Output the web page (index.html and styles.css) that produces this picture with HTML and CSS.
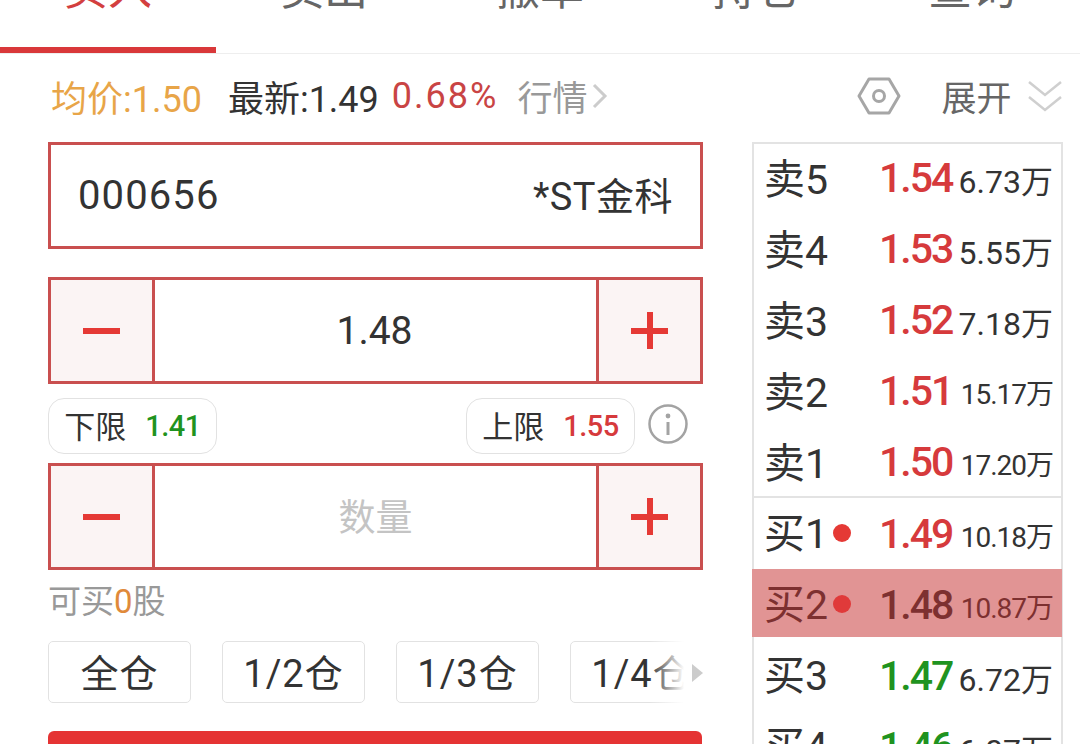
FILE: index.html
```html
<!DOCTYPE html>
<html lang="zh-CN">
<head>
<meta charset="utf-8">
<title>买入</title>
<link rel="stylesheet" href="styles.css">
</head>
<body>
<div class="page">
  <nav class="tabs">
    <div class="tab active">买入</div>
    <div class="tab">卖出</div>
    <div class="tab">撤单</div>
    <div class="tab">持仓</div>
    <div class="tab">查询</div>
  </nav>
  <div class="quote">
    <span class="avg">均价:1.50</span>
    <span class="latest">最新:1.49</span>
    <span class="pct">0.68%</span>
    <span class="market">行情</span>
    <svg class="chev" width="16" height="26" viewBox="0 0 16 26"><path d="M2 2l11 11L2 24" fill="none" stroke="#ccc" stroke-width="3"/></svg>
    <svg class="hex" width="44" height="38" viewBox="0 0 44 38"><path d="M12 2h20l10 17-10 17H12L2 19z" fill="none" stroke="#a6a6a6" stroke-width="3" stroke-linejoin="round"/><circle cx="22" cy="19" r="5.5" fill="none" stroke="#a6a6a6" stroke-width="3"/></svg>
    <span class="expand">展开</span>
    <svg class="dbl" width="34" height="34" viewBox="0 0 34 34"><path d="M1 3l16 13L33 3M1 18l16 13 16-13" fill="none" stroke="#cfcfcf" stroke-width="2.5"/></svg>
  </div>
  <div class="main">
    <section class="form">
      <div class="code box"><span class="code-no">000656</span><span class="code-name">*ST金科</span></div>
      <div class="stepper box">
        <div class="step"><span class="minus"></span></div>
        <div class="val">1.48</div>
        <div class="step"><span class="plus"></span></div>
      </div>
      <div class="limits">
        <div class="chip"><span class="lim-lab">下限</span><b class="lim green">1.41</b></div>
        <div class="chip up"><span class="lim-lab">上限</span><b class="lim red">1.55</b></div>
        <svg class="info" width="40" height="40" viewBox="0 0 40 40"><circle cx="20" cy="20" r="18.5" fill="none" stroke="#a3a3a3" stroke-width="2.5"/><circle cx="20" cy="12" r="2.4" fill="#a3a3a3"/><path d="M20 18v13" stroke="#a3a3a3" stroke-width="3"/></svg>
      </div>
      <div class="stepper box">
        <div class="step"><span class="minus"></span></div>
        <div class="val ph">数量</div>
        <div class="step"><span class="plus"></span></div>
      </div>
      <div class="can">可买<span class="zero">0</span>股</div>
      <div class="ratios">
        <div class="ratio">全仓</div>
        <div class="ratio">1/2仓</div>
        <div class="ratio">1/3仓</div>
        <div class="ratio">1/4仓</div>
        <div class="fade"></div>
        <div class="arrow"></div>
      </div>
      <div class="submit"></div>
    </section>
    <aside class="book">
      <div class="side">
        <div class="row"><span class="lab">卖5</span><span class="price red">1.54</span><span class="vol">6.73万</span></div>
        <div class="row"><span class="lab">卖4</span><span class="price red">1.53</span><span class="vol">5.55万</span></div>
        <div class="row"><span class="lab">卖3</span><span class="price red">1.52</span><span class="vol">7.18万</span></div>
        <div class="row"><span class="lab">卖2</span><span class="price red">1.51</span><span class="vol small">15.17万</span></div>
        <div class="row"><span class="lab">卖1</span><span class="price red">1.50</span><span class="vol small">17.20万</span></div>
      </div>
      <div class="side buy">
        <div class="row"><span class="lab">买1<i class="dot"></i></span><span class="price red">1.49</span><span class="vol small">10.18万</span></div>
        <div class="row sel"><span class="lab">买2<i class="dot"></i></span><span class="price">1.48</span><span class="vol small">10.87万</span></div>
        <div class="row"><span class="lab">买3</span><span class="price green">1.47</span><span class="vol">6.72万</span></div>
        <div class="row"><span class="lab">买4</span><span class="price green">1.46</span><span class="vol">6.07万</span></div>
      </div>
    </aside>
  </div>
</div>
</body>
</html>
```
FILE: styles.css
```css
* { box-sizing: border-box; }
html, body { margin: 0; height: 100%; overflow: hidden; background: #fff; }
body { font-family: Roboto, "Noto Sans CJK SC", sans-serif; color: #333; }
.page { width: 1080px; height: 744px; overflow: hidden; }

.tabs { display: flex; height: 54px; border-bottom: 1px solid #eee; overflow: hidden; }
.tab { width: 216px; height: 53px; display: flex; align-items: flex-end; justify-content: center; font-size: 44px; line-height: 60px; padding-bottom: 33px; color: #666; flex: none; }
.tab.active { color: #d33f3f; border-bottom: 6px solid #d9383a; padding-bottom: 27px; }

.quote { height: 88px; padding: 0 0 5px 51px; display: flex; align-items: center; font-size: 36px; }
.avg { color: #e8a548; }
.latest { margin-left: 26px; color: #333; }
.pct { margin-left: 13px; color: #c94444; letter-spacing: 2px; }
.market { margin-left: 19px; color: #999; font-size: 35px; }
.chev { margin-left: 5px; }
.hex { margin-left: 249px; }
.expand { margin-left: 40px; color: #666; font-size: 35px; }
.dbl { margin-left: 17px; }

.main { display: flex; align-items: flex-start; }
.form { width: 655px; margin-left: 48px; flex: none; }
.box { border: 3px solid #c94f4f; height: 107px; }
.code { display: flex; align-items: center; justify-content: space-between; padding: 0 27px 0 27px; }
.code-no { font-size: 40px; letter-spacing: 1.1px; }
.code-name { font-size: 38px; letter-spacing: 0.5px; padding-bottom: 5px; }

.stepper { display: flex; margin-top: 28px; }
.limits + .stepper { margin-top: 9px; }
.step { width: 104px; flex: none; background: #fbf4f4; display: flex; align-items: center; justify-content: center; }
.step:first-child { border-right: 3px solid #c94f4f; }
.step:last-child { border-left: 3px solid #c94f4f; }
.minus, .plus { display: block; width: 37px; height: 37px; background: linear-gradient(#e53935, #e53935) center / 37px 6px no-repeat; }
.plus { background: linear-gradient(#e53935, #e53935) center / 37px 6px no-repeat, linear-gradient(#e53935, #e53935) center / 6px 37px no-repeat; }
.val { flex: 1; display: flex; align-items: center; justify-content: center; font-size: 39px; padding-right: 2px; }
.val.ph { color: #c4c4c4; font-size: 37px; padding: 0 0 4px; }

.limits { display: flex; align-items: center; margin-top: 14px; }
.chip { width: 169px; height: 56px; border: 1px solid #e2e2e2; border-radius: 16px; display: flex; align-items: center; justify-content: center; color: #333; }
.chip.up { margin-left: 249px; }
.lim-lab { font-size: 31px; padding-bottom: 4px; }
.lim { font-weight: 500; font-size: 29px; letter-spacing: -0.5px; margin-left: 19px; }
.info { margin: 0 0 4px 13px; }
.green { color: #1f9320; }
.red { color: #d63a3c; }

.can { margin-top: 13px; font-size: 33px; color: #999; line-height: 38px; }
.zero { color: #e08a3a; }

.ratios { display: flex; gap: 31px; margin-top: 20px; position: relative; overflow: hidden; }
.ratio { width: 143px; height: 62px; flex: none; border: 1px solid #e2e2e2; border-radius: 5px; display: flex; align-items: center; justify-content: center; font-size: 38px; letter-spacing: 1px; padding-bottom: 4px; color: #333; }
.fade { position: absolute; right: 0; top: 0; bottom: 0; width: 54px; background: linear-gradient(to right, rgba(255,255,255,0), #fff 65%); }
.arrow { position: absolute; right: 0; top: 23px; width: 0; height: 0; border-left: 11px solid #ccc; border-top: 9px solid transparent; border-bottom: 9px solid transparent; }
.submit { height: 60px; margin-top: 28px; background: #e53333; border-radius: 6px; width: 654px; }

.book { width: 311px; margin-left: 49px; flex: none; border: 2px solid #e3e3e3; border-bottom: 0; height: 620px; }
.side { display: flex; flex-direction: column; gap: 3px; }
.buy { border-top: 2px solid #e3e3e3; }
.row { height: 68px; flex: none; display: flex; align-items: center; padding: 0 8px 0 10px; }
.buy .row { padding-top: 4px; }
.lab { width: 115px; font-size: 41px; flex: none; display: flex; align-items: center; padding-bottom: 5px; }
.buy .lab { padding-bottom: 8px; }
.price { width: 70px; font-size: 41px; font-weight: 500; flex: none; letter-spacing: -2px; }
.vol { margin-left: auto; font-size: 32px; white-space: nowrap; padding-top: 1px; }
.vol.small { font-size: 28px; letter-spacing: -1px; }
.dot { width: 18px; height: 18px; border-radius: 50%; background: #e53935; margin: 5px 0 0 5px; flex: none; }
.sel { background: #e19494; color: #7d3030; margin: 0 -1px 0 -2px; padding-left: 12px; padding-right: 9px; }
.sel .dot { background: #e03a3a; }
```
